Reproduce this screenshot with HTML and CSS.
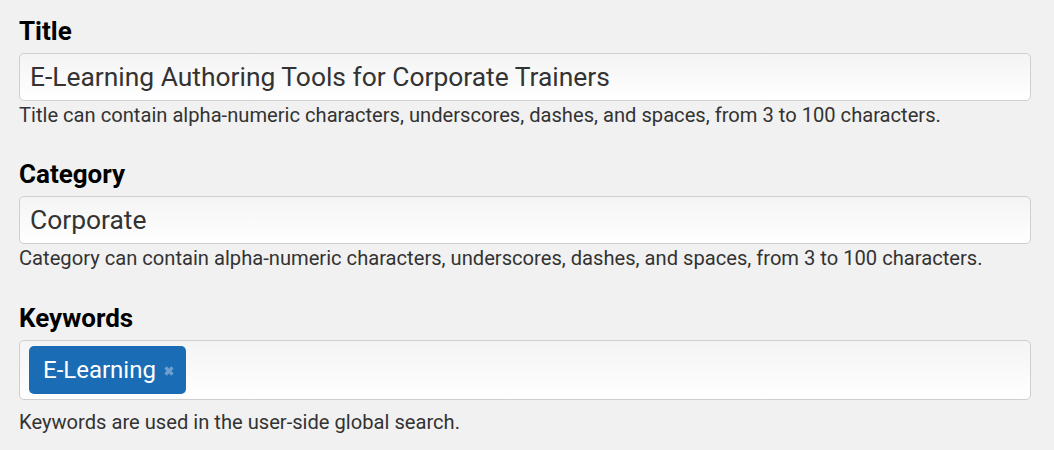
FILE: index.html
```html
<!DOCTYPE html>
<html>
<head>
<meta charset="utf-8">
<link rel="stylesheet" href="styles.css">
</head>
<body>
<form class="form">
  <div class="field">
    <label class="label">Title</label>
    <div class="input">E-Learning Authoring Tools for Corporate Trainers</div>
    <p class="help">Title can contain alpha-numeric characters, underscores, dashes, and spaces, from 3 to 100 characters.</p>
  </div>
  <div class="field">
    <label class="label">Category</label>
    <div class="input">Corporate</div>
    <p class="help">Category can contain alpha-numeric characters, underscores, dashes, and spaces, from 3 to 100 characters.</p>
  </div>
  <div class="field field-keywords">
    <label class="label">Keywords</label>
    <div class="input tags">
      <span class="tag">E-Learning<svg class="tag-x" width="12" height="12" viewBox="0 0 12 12"><path d="M2.5 2.5 L9.5 9.5 M9.5 2.5 L2.5 9.5" stroke="currentColor" stroke-width="3.2" stroke-linecap="butt"/></svg></span>
    </div>
    <p class="help">Keywords are used in the user-side global search.</p>
  </div>
</form>
</body>
</html>
```
FILE: styles.css
```css
html, body {
  margin: 0;
  padding: 0;
  background: #f1f1f1;
}
body {
  font-family: Roboto, "Liberation Sans", sans-serif;
  color: #333;
}
.form {
  width: 1012px;
  padding: 16px 0 0 19px;
  display: flex;
  flex-direction: column;
  gap: 32px;
}
.field {
  display: flex;
  flex-direction: column;
}
.field-keywords {
  margin-top: 1px;
}
.label {
  font-weight: bold;
  font-size: 26px;
  line-height: 30px;
  color: #000;
  margin-bottom: 7px;
}
.input {
  box-sizing: border-box;
  height: 48px;
  border: 1px solid #cfcfcf;
  border-radius: 5px;
  background: linear-gradient(#f4f4f4, #ffffff);
  padding: 0 10px;
  font-size: 26.4px;
  line-height: 46px;
  color: #333;
}
.tags {
  height: 60px;
  padding: 5px 9px;
  display: flex;
  align-items: flex-start;
  margin-bottom: 8px;
}
.tag {
  box-sizing: border-box;
  background: #1a6db5;
  color: #fff;
  border-radius: 5px;
  height: 48px;
  padding: 0 11px 0 14px;
  display: inline-flex;
  align-items: center;
  gap: 7px;
  font-size: 24px;
}
.tag-x {
  color: #6f9ed0;
  margin-top: 2px;
}
.help {
  margin: 2px 0 0;
  font-size: 20.15px;
  line-height: 24px;
  color: #333;
}
```
